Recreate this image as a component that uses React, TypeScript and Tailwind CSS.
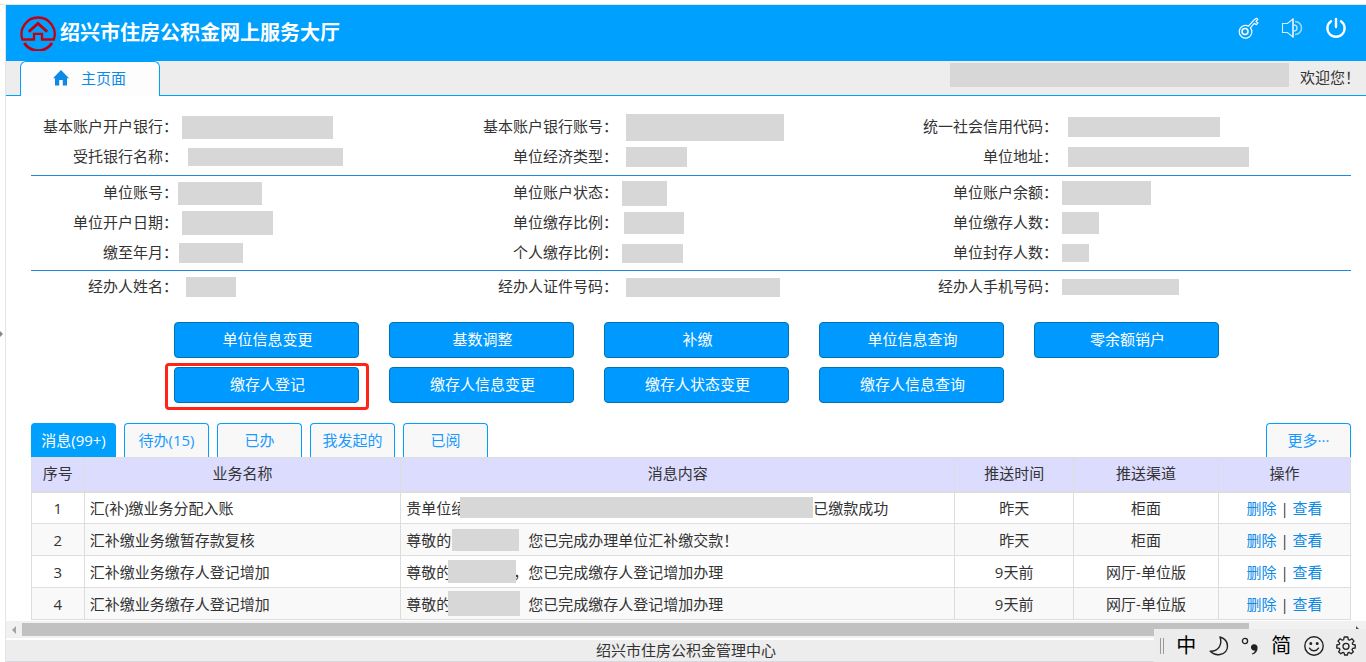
const SITE_TITLE = '绍兴市住房公积金网上服务大厅';
const FOOTER_TEXT = '绍兴市住房公积金管理中心';

// Masked values only carry the size of their grey block
const INFO_GROUPS = [
  [
    { label: '基本账户开户银行：', mask: 'ml-1 h-[23px] w-[151px]' },
    { label: '基本账户银行账号：', mask: 'ml-2 h-[27px] w-[158px]' },
    { label: '统一社会信用代码：', mask: 'ml-2.5 h-5 w-[152px]' },
    { label: '受托银行名称：', mask: 'ml-2.5 h-[18px] w-[155px]' },
    { label: '单位经济类型：', mask: 'ml-2 h-5 w-[61px]' },
    { label: '单位地址：', mask: 'ml-2.5 h-5 w-[181px]' },
  ],
  [
    { label: '单位账号：', mask: 'h-[23px] w-[84px]' },
    { label: '单位账户状态：', mask: 'ml-1 h-[25px] w-[45px]' },
    { label: '单位账户余额：', mask: 'ml-1 h-6 w-[89px]' },
    { label: '单位开户日期：', mask: 'ml-1 h-6 w-[91px]' },
    { label: '单位缴存比例：', mask: 'ml-1.5 h-[22px] w-[60px]' },
    { label: '单位缴存人数：', mask: 'ml-1 h-[22px] w-[37px]' },
    { label: '缴至年月：', mask: 'ml-px h-5 w-16' },
    { label: '个人缴存比例：', mask: 'ml-1 h-[19px] w-[61px]' },
    { label: '单位封存人数：', mask: 'ml-1 h-[18px] w-[27px]' },
  ],
  [
    { label: '经办人姓名：', mask: 'ml-2 h-5 w-[50px]' },
    { label: '经办人证件号码：', mask: 'ml-2 h-[19px] w-[154px]' },
    { label: '经办人手机号码：', mask: 'ml-1 h-4 w-[117px]' },
  ],
];

const GROUP_STYLES = [
  'border-b border-[#1b8ae0] pt-4 pb-[3px]',
  'border-b border-[#1b8ae0] py-0.5',
  'pt-px',
];

const ACTIONS = [
  { label: '单位信息变更' },
  { label: '基数调整' },
  { label: '补缴' },
  { label: '单位信息查询' },
  { label: '零余额销户' },
  { label: '缴存人登记', marked: true },
  { label: '缴存人信息变更' },
  { label: '缴存人状态变更' },
  { label: '缴存人信息查询' },
];

const TABS = ['消息(99+)', '待办(15)', '已办', '我发起的', '已阅'];

const COLUMNS = [
  { label: '序号', width: 'w-[4%]' },
  { label: '业务名称', width: 'w-[24%]' },
  { label: '消息内容', width: 'w-[42%]' },
  { label: '推送时间', width: 'w-[9%]' },
  { label: '推送渠道', width: 'w-[11%]' },
  { label: '操作', width: 'w-[10%]' },
];

const MESSAGES = [
  { name: '汇(补)缴业务分配入账', before: '贵单位绍', mask: '-ml-1.5 h-[21px] w-[353px]', after: '已缴款成功', time: '昨天', channel: '柜面' },
  { name: '汇补缴业务缴暂存款复核', before: '尊敬的', mask: 'ml-px -mr-1.5 h-[22px] w-[67px]', after: '，您已完成办理单位汇补缴交款！', time: '昨天', channel: '柜面' },
  { name: '汇补缴业务缴存人登记增加', before: '尊敬的', mask: '-ml-[3px] -mr-[3px] h-[23px] w-[68px]', after: '，您已完成缴存人登记增加办理', time: '9天前', channel: '网厅-单位版' },
  { name: '汇补缴业务缴存人登记增加', before: '尊敬的', mask: '-ml-[3px] -mr-[7px] h-[25px] w-[72px]', after: '，您已完成缴存人登记增加办理', time: '9天前', channel: '网厅-单位版' },
];

function Logo() {
  return (
    <svg viewBox="0 0 36 36" className="h-9 w-9" fill="none" stroke="#c4000c" strokeWidth="2.3">
      <path d="M2.4 24.5H14V18.8H22V24.5H33.8A16.6 16.6 0 1 0 2.4 24.5Z" />
      <path d="M4.2 28A16.6 16.6 0 0 0 32 28" strokeWidth="2.8" />
      <path d="M8.8 16.8L18 8.4L27.2 16.8" strokeWidth="2.8" />
    </svg>
  );
}

function KeyIcon() {
  return (
    <svg viewBox="0 0 22 22" className="h-[22px] w-[22px]" fill="none" stroke="#fff" strokeWidth="1.2" strokeLinejoin="round">
      <path d="M11.4 9.2L17.4 2.6L19.6 1.3L20.8 2.4L19 4.4L20.9 6L19.4 7.6L17.2 6.4L13.4 10.8A6.3 6.3 0 1 1 11.4 9.2Z" />
      <circle cx="8" cy="14.6" r="3" strokeWidth="1.5" />
    </svg>
  );
}

function SpeakerIcon() {
  return (
    <svg viewBox="0 0 22 22" className="h-[22px] w-[22px]" fill="none" stroke="#fff">
      <path d="M12 1.5V20.5" strokeWidth="1.5" />
      <path d="M12 2L6.5 6.5H1.5V15.5H6.5L12 20" strokeWidth="1.1" opacity="0.85" />
      <path d="M12 4.5A6.5 6.5 0 0 1 12 17.5" transform="translate(2 0)" strokeWidth="1.6" opacity="0.6" />
      <path d="M13 8A3 3 0 0 1 13 14" strokeWidth="1.5" opacity="0.7" />
    </svg>
  );
}

function PowerIcon() {
  return (
    <svg viewBox="0 0 22 22" className="h-[22px] w-[22px]" fill="none" stroke="#fff" strokeWidth="2.4" strokeLinecap="round">
      <path d="M6 4.2A8.6 8.6 0 1 0 16 4.2" />
      <path d="M11 2V10" />
    </svg>
  );
}

function InputMethodBar() {
  return (
    <div className="absolute right-0 bottom-0 flex h-[33px] w-[212px] items-center justify-between bg-[#ececec] pr-2.5 pl-1.5 text-[20px] text-black">
      <span className="h-4 w-1 border-x border-[#999]" />
      <span>中</span>
      <svg viewBox="0 0 20 20" className="h-5 w-5" fill="none" stroke="#222" strokeWidth="1.4" strokeLinejoin="round">
        <path d="M11 1C21 4 21 17 11 18.5C7 19.2 3.5 17.5 1.2 15.2C10 15.5 13.5 8 11 1Z" />
      </svg>
      <svg viewBox="0 0 18 20" className="h-5 w-[18px]">
        <circle cx="4" cy="5" r="2.6" fill="none" stroke="#222" strokeWidth="1.3" />
        <path d="M13 8.2A3.3 3.3 0 0 1 16.6 11.8C16.6 15.2 14.6 17.8 11.2 18.6L10.8 17.6C12.8 16.8 13.8 15.9 13.9 14.5A3.2 3.2 0 1 1 13 8.2Z" fill="#222" />
      </svg>
      <span>简</span>
      <svg viewBox="0 0 20 20" className="h-5 w-5" fill="none" stroke="#222" strokeWidth="1.4" strokeLinecap="round">
        <circle cx="10" cy="10" r="9.2" />
        <path d="M5.5 12.2C7.5 15.6 12.5 15.6 14.5 12.2" />
        <circle cx="6.8" cy="7.5" r="0.8" fill="#222" />
        <circle cx="13.2" cy="7.5" r="0.8" fill="#222" />
      </svg>
      <svg viewBox="0 0 20 20" className="h-5 w-5" fill="none" stroke="#222" strokeWidth="1.3" strokeLinejoin="round">
        <path d="M8.2 1H11.8L12.3 3.6L13.6 4.2L15.9 2.7L18 5.1L16.3 7.1L16.7 8.4L19.2 9V12L16.6 12.4L16 13.7L17.4 15.8L15.2 17.8L13.1 16.4L11.9 16.9L11.4 19H8.6L8.1 16.9L6.9 16.4L4.8 17.8L2.6 15.8L4 13.7L3.4 12.4L0.8 12V9L3.3 8.4L3.7 7.1L2 5.1L4.1 2.7L6.4 4.2L7.7 3.6Z" />
        <circle cx="10" cy="10.3" r="3" />
      </svg>
    </div>
  );
}

export default function App() {
  return (
    <div className="relative flex min-h-screen bg-white pt-1 font-['Open_Sans','Noto_Sans_CJK_SC',sans-serif] text-[15px] leading-5 text-[#333]">
      {/* Collapsed side panel */}
      <div className="flex w-1.5 shrink-0 items-center border-t border-r border-[#e5e5e5]">
        <span className="border-y-[3px] border-l-[3px] border-y-transparent border-l-[#888]" />
      </div>

      <div className="flex min-w-0 flex-1 flex-col border-t border-[#e5e5e5]">
        <header className="flex h-14 shrink-0 items-center justify-between bg-[#00a0ff] pr-[19px] pl-3.5 text-white">
          <div className="flex items-center gap-1">
            <Logo />
            <h1 className="text-[20px] font-bold">{SITE_TITLE}</h1>
          </div>
          <div className="flex items-center gap-[22px] pb-2.5">
            <button type="button" aria-label="修改密码"><KeyIcon /></button>
            <button type="button" aria-label="声音"><SpeakerIcon /></button>
            <button type="button" aria-label="退出"><PowerIcon /></button>
          </div>
        </header>

        {/* Page tab and greeting */}
        <div className="flex h-[35px] shrink-0 justify-between border-b border-[#00a0ff] bg-[#ededed] pr-1.5 pl-3.5">
          <a href="#" className="-mb-px flex w-[140px] items-center gap-3 rounded-t-md border border-b-0 border-[#00a0ff] bg-[#fdfdfd] pb-0.5 pl-8 text-[#0c8ae6]">
            <svg viewBox="0 0 16 16" className="h-4 w-4" fill="currentColor">
              <path d="M8 0L16 8.2H14V15.5H9.8V10H6.2V15.5H2V8.2H0Z" />
            </svg>
            主页面
          </a>
          <div className="flex gap-[11px] pt-0.5">
            <span className="h-6 w-[339px] bg-[#d7d7d7]" />
            <span className="pt-1">欢迎您！</span>
          </div>
        </div>

        <main className="pr-[15px] pl-[25px]">
          {INFO_GROUPS.map((group, i) => (
            <dl key={i} className={`grid grid-cols-3 ${GROUP_STYLES[i]}`}>
              {group.map((item) => (
                <div key={item.label} className="flex h-[30px] items-center">
                  <dt className="w-[147px] pb-0.5 text-right whitespace-nowrap">{item.label}</dt>
                  <dd className={`bg-[#d7d7d7] ${item.mask}`} />
                </div>
              ))}
            </dl>
          ))}

          {/* Shortcuts */}
          <div className="mt-5 grid grid-cols-[repeat(5,185px)] justify-center gap-x-[30px] gap-y-[9px] pl-2.5">
            {ACTIONS.map((action) => (
              <button
                key={action.label}
                type="button"
                className="relative h-9 rounded border border-[#0074b0] bg-[#0099ff] pb-0.5 pl-[3px] text-white"
              >
                {action.label}
                {action.marked && (
                  <span className="absolute -top-[5px] -right-[11px] -bottom-2 -left-2.5 rounded-sm border-[3px] border-[#ff2418]" />
                )}
              </button>
            ))}
          </div>

          {/* Message tabs */}
          <div className="mt-5 flex gap-2">
            {TABS.map((tab, i) => (
              <button
                key={tab}
                type="button"
                className={`h-[34px] w-[85px] rounded-t border border-b-0 border-[#00a0ff] pb-0.5 ${i === 0 ? 'bg-[#00a0ff] text-white' : 'bg-[#f8f8f8] text-[#1a9aff]'}`}
              >
                {tab}
              </button>
            ))}
            <button type="button" className="ml-auto h-[34px] w-[85px] rounded-t border border-b-0 border-[#00a0ff] bg-[#f8f8f8] pb-0.5 text-[#1a9aff]">
              更多···
            </button>
          </div>

          <table className="w-full table-fixed border-collapse">
            <thead>
              <tr className="h-[34px] bg-[#dcdcff]">
                {COLUMNS.map((col) => (
                  <th key={col.label} className={`border border-b-2 border-[#ddd] pb-0.5 font-normal ${col.width}`}>
                    {col.label}
                  </th>
                ))}
              </tr>
            </thead>
            <tbody className="text-center">
              {MESSAGES.map((msg, i) => (
                <tr key={i} className="h-8 even:bg-[#f9f9f9]">
                  <td className="border border-[#ddd]">{i + 1}</td>
                  <td className="border border-[#ddd] pl-[5px] text-left">{msg.name}</td>
                  <td className="border border-[#ddd] pl-[5px] text-left">
                    <div className="flex items-center whitespace-nowrap">
                      <span>{msg.before}</span>
                      <span className={`relative bg-[#d7d7d7] ${msg.mask}`} />
                      <span>{msg.after}</span>
                    </div>
                  </td>
                  <td className="border border-[#ddd]">{msg.time}</td>
                  <td className="border border-[#ddd]">{msg.channel}</td>
                  <td className="border border-[#ddd]">
                    <a href="#" className="text-[#0c8ae6]">删除</a> | <a href="#" className="text-[#0c8ae6]">查看</a>
                  </td>
                </tr>
              ))}
            </tbody>
          </table>
        </main>

        {/* Horizontal scrollbar */}
        <div className="mt-auto flex h-[17px] shrink-0 items-center gap-1.5 bg-[#f1f1f1] pr-1.5 pl-1.5">
          <span className="border-y-4 border-r-4 border-y-transparent border-r-[#a3a3a3]" />
          <span className="h-[13px] w-[91%] bg-[#c1c1c1]" />
          <span className="ml-auto border-y-4 border-l-4 border-y-transparent border-l-[#505050]" />
        </div>

        <footer className="mt-0.5 h-[22px] shrink-0 border-b border-[#d8d8e0] bg-[#ededed] text-center">
          {FOOTER_TEXT}
        </footer>
      </div>

      <InputMethodBar />
    </div>
  );
}
